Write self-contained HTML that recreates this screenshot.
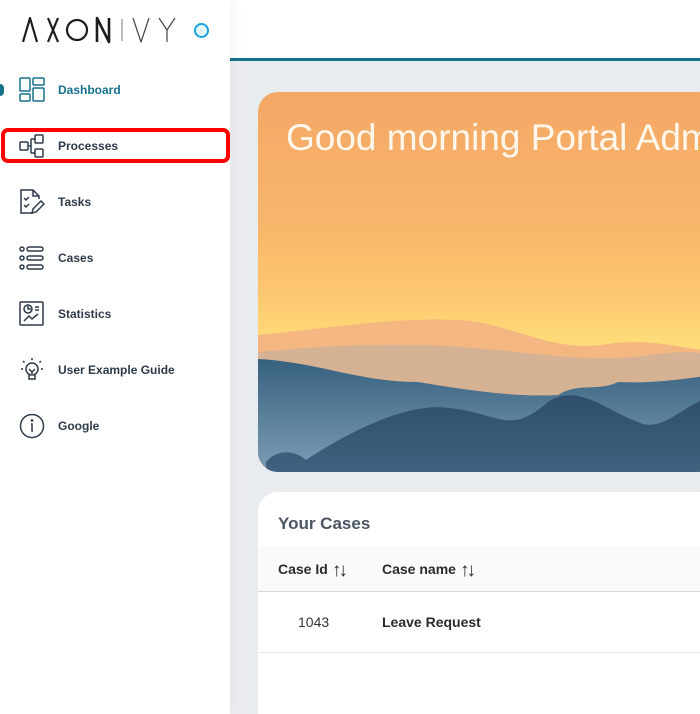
<!DOCTYPE html>
<html style="width:700px;height:714px;overflow:hidden"><head><meta charset="utf-8"><style>
*{margin:0;padding:0;box-sizing:border-box}
body{width:700px;height:714px;overflow:hidden;background:#e9ecef;font-family:"Liberation Sans",sans-serif;position:relative}
.top{position:absolute;left:0;top:0;width:700px;height:58px;background:#fff}
.line{position:absolute;left:230px;top:58px;width:470px;height:3px;background:#16718f}
.side{position:absolute;left:0;top:0;width:230px;height:714px;background:#fff;box-shadow:2px 0 12px rgba(0,0,0,.06)}
.strip{position:absolute;left:230px;top:61px;width:18px;height:653px;background:linear-gradient(90deg,#eef0f2,#e9ecef)}
.item{position:absolute;left:0;width:230px;height:40px;display:flex;align-items:center}
.item svg{position:absolute;left:19px;width:26px;height:26px;fill:none;stroke:#2d3a4a;stroke-width:1.5}
.item span{position:absolute;left:58px;font-size:12px;font-weight:bold;color:#2d3a4a}
.hero{position:absolute;left:258px;top:92px;width:460px;height:380px;border-radius:20px;overflow:hidden;background:linear-gradient(180deg,#f4a866 0%,#f8b56a 35%,#fdc970 55%,#ffdb78 65%)}
.hero h1{position:absolute;left:28px;top:25px;font-weight:normal;font-size:37px;color:#fff7ec;white-space:nowrap}
.card{position:absolute;left:258px;top:492px;width:460px;height:222px;background:#fff;border-radius:20px 20px 0 0}
.ar{font-size:19px;font-weight:normal;vertical-align:-2px;letter-spacing:-3px;margin-left:4px}
</style></head><body>
<div class="top"></div>
<div class="line"></div>
<div class="strip"></div>
<div class="side">
 <div style="position:absolute;left:22px;top:16px">
  <svg width="156" height="28" viewBox="0 0 156 28" style="display:block;fill:none;stroke:#1d1d1d;stroke-width:2.2;stroke-linejoin:round">
   <path d="M1 26 L8 2 L15 26"/>
   <path d="M26 2 L36 26 M36 2 L26 26" />
   <circle cx="55" cy="14" r="10"/>
   <path d="M75 26 V2 L87 26 V2" stroke-width="2.6"/>
   <path d="M100 3 V25" stroke-width="1" stroke="#777"/>
   <path d="M111 2 L119 26 L127 2 M137 2 L145 14 L153 2 M145 14 V26" stroke-width="1.2" stroke="#444"/>
  </svg>
 </div>
 <div style="position:absolute;left:194px;top:23px;width:15px;height:15px;border-radius:50%;border:2px solid #1ba5d8;background:#e6f6fc"></div>
 <div style="position:absolute;left:-4px;top:84px;width:8px;height:12px;border-radius:4px;background:#16718f"></div>
 <div class="item" style="top:70px"><svg viewBox="0 0 26 26" style="stroke:#16718f"><rect x="1" y="1" width="10" height="13" rx="1"/><rect x="1" y="17" width="10" height="7" rx="1"/><rect x="14" y="1" width="11" height="7" rx="1"/><rect x="14" y="11" width="11" height="13" rx="1"/></svg><span style="color:#16718f">Dashboard</span></div>
 <div style="position:absolute;left:1px;top:128px;width:229px;height:35px;border:4px solid #f00;border-radius:7px"></div>
 <div class="item" style="top:126px"><svg viewBox="0 0 26 26"><rect x="1" y="9" width="8" height="8" rx="1"/><rect x="16" y="2" width="8" height="8" rx="1"/><rect x="16" y="16" width="8" height="8" rx="1"/><path d="M9 13 H12 M12 6 V20 M12 6 H16 M12 20 H16"/></svg><span>Processes</span></div>
 <div class="item" style="top:182px"><svg viewBox="0 0 26 26"><path d="M14 24 H2 V1 H14 L20 7 V10 M14 1 V7 H20"/><path d="M5 9 l2 2 3-3 M5 16 l2 2 3-3"/><path d="M13 24 l1-4 8-8 3 3 -8 8 z"/></svg><span>Tasks</span></div>
 <div class="item" style="top:238px"><svg viewBox="0 0 26 26"><circle cx="3" cy="4" r="2"/><circle cx="3" cy="13" r="2"/><circle cx="3" cy="22" r="2"/><rect x="8" y="2" width="16" height="4" rx="2"/><rect x="8" y="11" width="16" height="4" rx="2"/><rect x="8" y="20" width="16" height="4" rx="2"/></svg><span>Cases</span></div>
 <div class="item" style="top:294px"><svg viewBox="0 0 26 26"><rect x="1" y="1" width="23" height="23" rx="1"/><circle cx="9" cy="8" r="4"/><path d="M9 5 V8 H12 M16 6 H20 M16 9 H20 M5 20 l5-5 3 3 6-5"/></svg><span>Statistics</span></div>
 <div class="item" style="top:350px"><svg viewBox="0 0 26 26"><circle cx="13" cy="12" r="6"/><path d="M10 17 V22 H16 V17 M10 12 l3 3 3-3 M13 15 V17 M13 1 V3 M4 4 l1.5 1.5 M22 4 l-1.5 1.5 M2 12 H4 M22 12 H24"/></svg><span>User Example Guide</span></div>
 <div class="item" style="top:406px"><svg viewBox="0 0 26 26"><circle cx="13" cy="13" r="11.5"/><path d="M12 11 H13 V18 H14"/><circle cx="13" cy="7.5" r=".6"/></svg><span>Google</span></div>
</div>
<div class="hero">
 <svg width="460" height="380" viewBox="0 0 460 380" style="position:absolute;left:0;top:0">
  <defs><linearGradient id="g1" x1="0" y1="0" x2="0" y2="1"><stop offset="0" stop-color="#36617f"/><stop offset="1" stop-color="#7d9db4"/></linearGradient>
  <linearGradient id="g2" x1="0" y1="0" x2="0" y2="1"><stop offset="0" stop-color="#2d4c68"/><stop offset="1" stop-color="#3f6280"/></linearGradient></defs>
  <path d="M0 243 C80 235 160 222 220 230 C270 240 300 260 350 252 C400 245 430 260 460 258 V380 H0Z" fill="#f4b781"/>
  <path d="M0 260 C80 252 160 250 240 258 C300 265 350 270 400 262 C430 258 450 262 460 262 V380 H0Z" fill="#d6b294"/>
  <path d="M0 267 C60 270 100 290 160 290 C220 300 260 305 300 303 C320 290 340 300 360 290 C400 292 440 285 460 282 V380 H0Z" fill="url(#g1)"/>
  <path d="M8 370 C20 355 40 360 48 368 C90 340 150 310 190 316 C240 320 250 345 290 310 C320 290 350 320 380 330 C400 340 420 320 440 310 L460 295 V380 H8Z" fill="url(#g2)"/>
 </svg>
 <h1>Good morning Portal Admin</h1>
</div>
<div class="card">
 <div style="position:absolute;left:20px;top:22px;font-size:17px;font-weight:bold;color:#4b5563">Your Cases</div>
 <div style="position:absolute;left:0;top:54px;width:460px;height:46px;background:#fafafa;border-bottom:1px solid #d5d9de"></div>
 <div style="position:absolute;left:20px;top:68px;font-size:14px;font-weight:bold;color:#2b2b2b">Case Id<span class="ar">↑↓</span></div>
 <div style="position:absolute;left:124px;top:68px;font-size:14px;font-weight:bold;color:#2b2b2b">Case name<span class="ar">↑↓</span></div>
 <div style="position:absolute;left:40px;top:122px;font-size:14px;color:#333">1043</div>
 <div style="position:absolute;left:124px;top:122px;font-size:14px;font-weight:bold;color:#2b2b2b">Leave Request</div>
 <div style="position:absolute;left:0;top:160px;width:460px;height:1px;background:#e4e6e9"></div>
</div>
</body></html>
